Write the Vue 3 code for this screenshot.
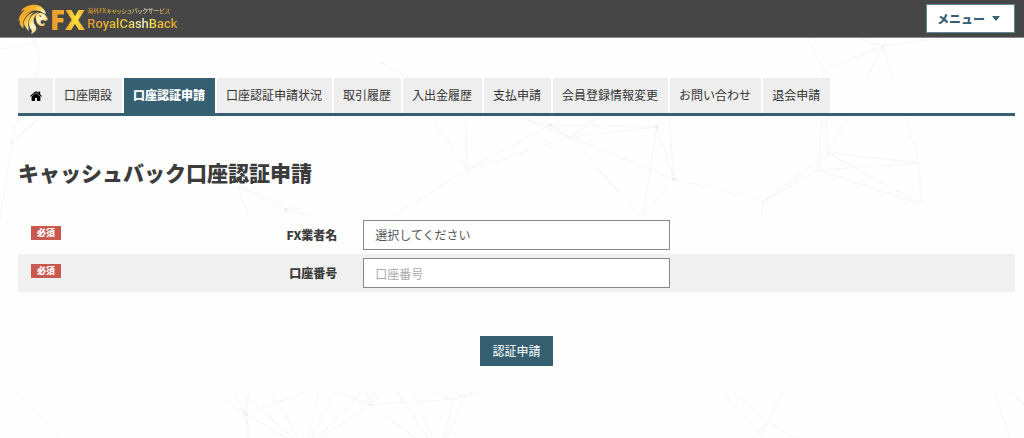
<!-- src/App.vue -->
<template>
  <div class="page">
    <svg class="network" viewBox="0 0 1024 438" preserveAspectRatio="xMidYMin slice" aria-hidden="true">
      <path v-for="(line, i) in NETWORK_LINES" :key="i" :d="line" />
      <circle v-for="(dot, i) in NETWORK_DOTS" :key="'d' + i" :cx="dot[0]" :cy="dot[1]" :r="dot[2]" />
    </svg>

    <header class="header">
      <a href="#" class="logo">
        <svg class="logo-lion" viewBox="0 0 30 30" aria-hidden="true">
          <defs>
            <linearGradient id="gold" gradientUnits="userSpaceOnUse" x1="2" y1="4" x2="26" y2="26">
              <stop offset="0" stop-color="#ee9c2a" />
              <stop offset="0.35" stop-color="#f7b52e" />
              <stop offset="0.55" stop-color="#ffe680" />
              <stop offset="0.68" stop-color="#fff6cc" />
              <stop offset="1" stop-color="#eeae2e" />
            </linearGradient>
          </defs>
          <g fill="url(#gold)">
            <path d="M2 8C6 2 13 0 19 1C24 2 27 6 28 10L25 9C21 6 16 6 12 8C7 9 3 12 1 16C1 12 3 9 7 6C5 6 3 7 2 8Z" />
            <path d="M0 18C1 12 6 9 13 8C7 12 4 17 5 24C2 22 1 19 2 16C1 16 0 17 0 18Z" />
            <path d="M6 25C4 17 8 11 16 8C11 13 9 18 11 27C8 25 7 22 7 20C6 22 6 23 6 25Z" />
            <path d="M12 24C9 16 13 10 21 8C16 12 14 16 17 21C20 25 18 28 13 30C15 27 13 25 12 24Z" />
            <path d="M18 15C17 11 19 9 23 9C25 10 27 10 28 12L30 15L28 17L24 16C22 17 22 19 24 20L27 19L26 22L23 22C20 21 18 18 18 15Z" />
          </g>
          <path d="M21 11L24 12L22 13Z" fill="#464646" />
        </svg>
        <span class="logo-fx">FX</span>
        <span class="logo-words">
          <span class="logo-tagline">海外FXキャッシュバックサービス</span>
          <span class="logo-name">RoyalCashBack</span>
        </span>
      </a>
      <button type="button" class="menu-button">
        メニュー
        <svg class="caret" viewBox="0 0 8 5" aria-hidden="true"><path d="M0 0H8L4 5Z" /></svg>
      </button>
    </header>

    <main class="content">
      <nav class="tabs">
        <a href="#" class="tab tab-home" aria-label="ホーム">
          <svg class="home-icon" viewBox="0 0 12 10" aria-hidden="true">
            <path d="M6 2L10.4 5.6V9.4Q10.4 10 9.8 10H7V7H5V10H2.2Q1.6 10 1.6 9.4V5.6Z" />
            <path d="M0 5L5.3 0.4Q6 -0.1 6.7 0.4L8.4 1.8V0.4H10.2V3.4L12 5L11.3 5.8L6 1.5L0.7 5.8Z" />
          </svg>
        </a>
        <a v-for="tab in tabs" :key="tab" href="#" class="tab" :class="{ active: tab === activeTab }"
          @click.prevent="activeTab = tab">{{ tab }}</a>
      </nav>

      <h1 class="title">キャッシュバック口座認証申請</h1>

      <form class="form" @submit.prevent>
        <div class="row">
          <label for="broker" class="label"><span class="badge">必須</span>FX業者名</label>
          <div class="field">
            <select id="broker" v-model="broker" class="control">
              <option value="">選択してください</option>
            </select>
          </div>
        </div>
        <div class="row row-shaded">
          <label for="account" class="label"><span class="badge">必須</span>口座番号</label>
          <div class="field">
            <input id="account" v-model="account" type="text" class="control" placeholder="口座番号" />
          </div>
        </div>
        <button type="submit" class="submit">認証申請</button>
      </form>
    </main>
  </div>
</template>

<script setup>
import { ref } from 'vue';

// ─── CONSTANTS ────────────────────────────────────────────────────────────────
const tabs = [
  '口座開設',
  '口座認証申請',
  '口座認証申請状況',
  '取引履歴',
  '入出金履歴',
  '支払申請',
  '会員登録情報変更',
  'お問い合わせ',
  '退会申請'
];

// Faint background mesh
const NETWORK_LINES = [
  'M0 49L36 43L34 38M36 43L40 60L35 78',
  'M43 115L12 142L0 130M12 142L0 151M12 142L0 220M12 142L18 115',
  'M248 216L238 186L286 210L312 216M238 186L300 210',
  'M380 62L410 78',
  'M432 118L467 170L466 115M467 170L393 216',
  'M467 170L550 125L510 115M467 170L570 137L515 115M550 125L570 137L600 116',
  'M550 125L657 127L570 137L674 179M570 137L640 216M657 127L659 115',
  'M657 127L674 179L643 216L657 127M674 179L669 115',
  'M674 179L764 201L762 216M764 201L828 153L818 170L764 201',
  'M828 153L919 163L921 204L828 153M818 170L919 163M818 170L921 204',
  'M828 153L826 115M818 170L822 115M828 153L846 118M919 163L906 119',
  'M808 38L824 70L883 46L858 38M883 46L940 38M883 46L867 78M883 46L893 78M824 70V78',
  'M17 392L60 438',
  'M214 392L246 414L234 392M246 414L249 392M246 414L305 392M246 414L287 438M246 414L247 438M246 414L250 438',
  'M241 392L293 438M271 392L298 438M319 392L308 438M336 392L312 438M362 392L317 438',
  'M338 392L370 405L320 438M370 405L367 392M370 405L375 392M370 405L382 392M370 405L416 438M370 405L453 399L479 392',
  'M397 392L428 438M413 392L433 438M453 399L444 438M465 396L447 438M434 392L453 399M446 392L465 396',
  'M783 392L760 438M733 392L768 422L795 438M722 392L760 434M753 438L768 422',
  'M994 392L1010 438M1012 392L1024 405'
];
const NETWORK_DOTS = [
  [12, 142, 1],
  [286, 210, 2],
  [467, 170, 1],
  [550, 125, 2],
  [657, 127, 2],
  [674, 179, 2],
  [828, 153, 1],
  [883, 46, 1],
  [246, 414, 2],
  [370, 405, 1]
];

// ─── REACTIVE STATE ──────────────────────────────────────────────────────────
const activeTab = ref('口座認証申請');
const broker = ref('');
const account = ref('');
</script>

<style>
body {
  background: #fefefe;
}
</style>

<style scoped>
/* ─── PAGE ───────────────────────────────────────────────────────────────────── */
.page {
  position: relative;
  min-height: 100vh;
  overflow: hidden;
  color: #3c3c3c;
  font-family: 'Noto Sans CJK JP', sans-serif;
  font-size: 12px;
  line-height: 18px;
}

.page * {
  box-sizing: border-box;
}

.network {
  position: absolute;
  inset: 0;
  width: 100%;
  height: 100%;
  z-index: -1;
  fill: none;
  stroke: #f6f6f6;
}

.network circle {
  fill: #eee;
  stroke: none;
}

button,
input,
select {
  font: inherit;
  border-radius: 0;
}

/* ─── HEADER ─────────────────────────────────────────────────────────────────── */
.header {
  display: flex;
  align-items: center;
  justify-content: space-between;
  height: 38px;
  padding: 0 9px 0 18px;
  background: #464646;
  border-bottom: 1px solid #8a8a8a;
}

.logo {
  display: flex;
  align-items: center;
  text-decoration: none;
}

.logo-lion {
  width: 30px;
  height: 30px;
  margin-right: 2px;
}

.logo-fx,
.logo-tagline,
.logo-name {
  color: transparent;
  background-clip: text;
  -webkit-background-clip: text;
}

.logo-fx {
  margin-right: 2px;
  font-family: 'Open Sans', sans-serif;
  font-size: 28px;
  font-weight: 800;
  line-height: 36px;
  background-image: linear-gradient(90deg, #eb9a2e, #f6b02c 50%, #ffe23c 75%, #f0a62c);
}

.logo-words {
  display: flex;
  flex-direction: column;
  align-items: flex-start;
  gap: 1px;
}

.logo-tagline {
  font-size: 6px;
  font-weight: 500;
  line-height: 9px;
  font-feature-settings: 'palt';
  background-image: linear-gradient(90deg, #d9902f, #e8c93b 45%, #f3edc0 70%, #dfa135);
}

.logo-name {
  font-family: Roboto, sans-serif;
  font-size: 13px;
  font-weight: 500;
  line-height: 16px;
  background-image: linear-gradient(90deg, #e5942f, #f0d23a 42%, #f8f3cf 62%, #f1d840 72%, #e79a2e);
}

.menu-button {
  display: flex;
  align-items: center;
  gap: 7px;
  height: 29px;
  padding: 0 14px 0 10px;
  color: #365f71;
  font-weight: 900;
  background: #fff;
  border: 1px solid #5f8799;
}

.caret {
  width: 8px;
  height: 5px;
  fill: #365f71;
}

/* ─── TABS ───────────────────────────────────────────────────────────────────── */
.content {
  padding: 40px 9px 0 18px;
}

.tabs {
  display: flex;
  gap: 2px;
  background: #fefefe;
  border-bottom: 3px solid #365f71;
}

.tab {
  padding: 8px 10px 9px 9px;
  color: #333;
  text-decoration: none;
  white-space: nowrap;
  background: #eee;
}

.tab-home {
  display: flex;
  align-items: center;
  padding: 0 11px 0 12px;
}

.home-icon {
  width: 12px;
  height: 10px;
  fill: #000;
}

.tab.active {
  color: #fff;
  font-weight: 900;
  background: #365f71;
}

/* ─── FORM ───────────────────────────────────────────────────────────────────── */
.title {
  margin: 0;
  padding: 41px 0 29px;
  font-size: 21px;
  font-weight: 900;
  line-height: 30px;
}

.form {
  padding-bottom: 26px;
  background: #fefefe;
}

.row {
  display: grid;
  grid-template-columns: 1fr 1fr 1fr;
  padding: 4px 0;
}

.row-shaded {
  background: #f0f0f0;
}

.label {
  display: flex;
  align-items: flex-start;
  justify-content: space-between;
  padding: 6px 13px 0;
  font-weight: 900;
}

.badge {
  padding: 0 6px;
  color: #fff;
  font-size: 9px;
  line-height: 14px;
  background: #c9584f;
}

.field {
  padding: 0 13px;
}

.control {
  display: block;
  width: 100%;
  height: 30px;
  padding: 0 11px;
  color: #555;
  background: #fff;
  border: 1px solid #888;
  appearance: none;
}

.control::placeholder {
  color: #aaa;
  opacity: 1;
}

.submit {
  display: block;
  height: 30px;
  margin: 44px auto 0;
  padding: 0 12px;
  color: #fff;
  background: #365f71;
  border: 0;
}
</style>
